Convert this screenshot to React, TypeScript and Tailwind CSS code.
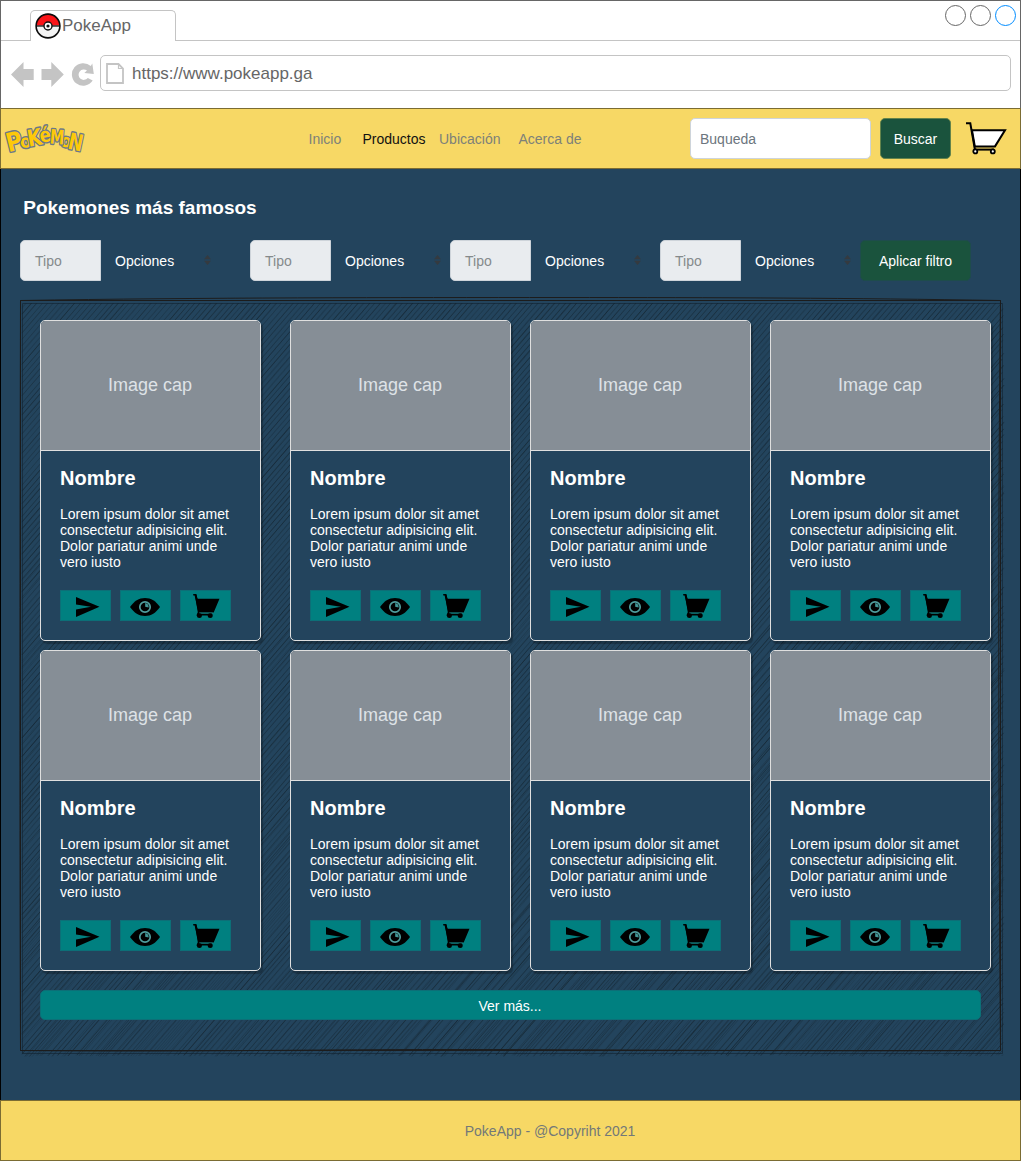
import React from "react";

const HATCH_LEFT = 22;
const HATCH_RIGHT = 1003;
const HATCH_TOP = 303;
const HATCH_BOTTOM = 1055;

// Repeatable noise in the 0..1 range, so the sketch looks the same on every render.
function noise(n: number) {
  const v = Math.sin(n * 127.1 + 11.7) * 43758.5453;
  return v - Math.floor(v);
}

function buildHatch() {
  const lines: { x1: number; y1: number; x2: number; y2: number; o: number }[] = [];
  for (let pass = 0; pass < 2; pass++) {
    let i = 0;
    for (let c = HATCH_LEFT + 4; c < HATCH_RIGHT + (HATCH_BOTTOM - HATCH_TOP) / 1.16; c += 5.45) {
      i++;
      const k = 1.16 + (noise(i + pass * 500) - 0.5) * 0.006;
      let x1 = c + (noise(i * 3 + pass) - 0.5) * 1.2;
      let y1 = HATCH_TOP;
      if (x1 > HATCH_RIGHT - 1) {
        y1 += (x1 - HATCH_RIGHT + 1) * k;
        x1 = HATCH_RIGHT - 1 + noise(i) * 2;
      }
      let y2 = HATCH_BOTTOM + noise(i * 7) * 1.5;
      let x2 = x1 - (y2 - y1) / k;
      if (x2 < HATCH_LEFT) {
        y2 = y1 + (x1 - HATCH_LEFT) * k;
        x2 = HATCH_LEFT;
      }
      if (y2 <= y1) continue;
      const strength = pass === 0 ? 0.6 : 0.35;
      lines.push({ x1, y1, x2, y2, o: 0.15 + noise(i * 5 + pass) * strength });
    }
  }
  return lines;
}

const hatch = buildHatch();

function SketchFrame() {
  return (
    <svg className="absolute -left-5 -top-[300px] pointer-events-none" width="1021" height="1161" fill="none">
      <g stroke="#142028" strokeWidth="0.7">
        {hatch.map((l, i) => (
          <line key={i} x1={l.x1} y1={l.y1} x2={l.x2} y2={l.y2} strokeOpacity={l.o} />
        ))}
      </g>
      <g stroke="#10212e" strokeOpacity="0.6" strokeWidth="1">
        <path d="M22.5 303.5H1002.5V1053.5H22.5Z" />
      </g>
      <g stroke="#1c1c1c" strokeWidth="1">
        <path d="M20.5 300.5H1000.5V1050.5H20.5Z" />
        <path d="M20.5 300.5C200 297.5 400 297.5 560 297.5S850 298 1000.5 300.5C998 500 998.5 800 1000.5 1050.5C820 1051.5 600 1049.5 450 1049.5S200 1052 20.5 1050.5C19.5 800 20 500 20.5 300.5" />
      </g>
    </svg>
  );
}

function PokeBall() {
  return (
    <svg width="26" height="26" viewBox="0 0 26 26" className="shrink-0">
      <circle cx="13" cy="13" r="11.8" fill="#f4f4f4" />
      <path d="M1.3 12.5a11.7 11.7 0 0 1 23.4 0Z" fill="#fb1418" />
      <path d="M1 13H25" stroke="#111" strokeWidth="1.3" />
      <circle cx="13" cy="13" r="11.9" fill="none" stroke="#0b0b0b" strokeWidth="1.6" />
      <circle cx="13" cy="13" r="4" fill="#fff" stroke="#111" strokeWidth="1.4" />
      <circle cx="13" cy="13" r="1.6" fill="#111" />
    </svg>
  );
}

const logoLetters = [
  { ch: "o", x: 25.6, y: 26.6, s: 18, r: -10, w: 0.92 },
  { ch: "P", x: 15.2, y: 29.2, s: 26, r: -14, w: 0.84 },
  { ch: "K", x: 35, y: 24.6, s: 23, r: -10, w: 0.82 },
  { ch: "o", x: 64.2, y: 26, s: 18, r: 8, w: 0.9 },
  { ch: "é", x: 45.6, y: 20.8, s: 20, r: -12, w: 0.84 },
  { ch: "M", x: 55.6, y: 23, s: 20, r: 4, w: 0.72 },
  { ch: "N", x: 73.2, y: 29, s: 23, r: 12, w: 0.76 },
];

function PokemonLogo() {
  return (
    <svg width="90" height="40" viewBox="0 0 90 40" className="shrink-0" role="img" aria-label="Pokémon">
      {logoLetters.map((l, i) => (
        <text
          key={i}
          transform={`translate(${l.x} ${l.y}) rotate(${l.r}) scale(${l.w} 1)`}
          fontFamily="'DejaVu Sans', sans-serif"
          fontWeight="bold"
          fontSize={l.s}
          textAnchor="middle"
          fill="#fdc90a"
          stroke="#6b7888"
          strokeWidth="2.8"
          strokeLinejoin="round"
          style={{ paintOrder: "stroke" }}
        >
          {l.ch}
        </text>
      ))}
    </svg>
  );
}

function OutlineCart() {
  return (
    <svg width="42" height="34" viewBox="0 0 42 34" fill="none" stroke="#000" strokeWidth="2">
      <path d="M7 8.3H40L30 24.4H9.8Z" fill="#fff" />
      <path d="M1 1.3H5.3L10 28" />
      <path d="M9 27.6H29" />
      <circle cx="10.3" cy="29.4" r="2" fill="#fff" strokeWidth="1.8" />
      <circle cx="27.8" cy="29.4" r="2" fill="#fff" strokeWidth="1.8" />
    </svg>
  );
}

function SendIcon() {
  return (
    <svg width="24" height="20" viewBox="0 0 24 20">
      <path d="M0 0L23.5 9.8L0 20V12.4L15 9.8L0 7.4Z" fill="#000" />
    </svg>
  );
}

function EyeIcon() {
  return (
    <svg width="30" height="18" viewBox="0 0 30 18">
      <path d="M0 9C4 3.2 9 0 15 0S26 3.2 30 9C26 14.8 21 18 15 18S4 14.8 0 9Z" fill="#000" />
      <circle cx="15" cy="9" r="5.2" stroke="#4f9c9c" strokeWidth="1.7" fill="#000" />
      <path d="M15.2 5V8.8L18.6 9.6A3.9 3.9 0 0 0 15.2 5Z" fill="#3f9494" />
    </svg>
  );
}

function CartIcon() {
  return (
    <svg width="27" height="24" viewBox="0 0 27 24">
      <path d="M1.5 0.9H3.4L4.7 4.8H26.5L20.7 18.5H5.4Z" fill="#000" />
      <path d="M0.2 0.8H2.8L5.6 18.4L4.6 20.6H19" fill="none" stroke="#000" strokeWidth="1.6" />
      <circle cx="6.4" cy="21.4" r="2.5" fill="#000" />
      <circle cx="17.2" cy="21.4" r="2.5" fill="#000" />
      <path d="M6.4 18.9H19.8" stroke="#287575" strokeWidth=".6" />
    </svg>
  );
}

function Card() {
  return (
    <article className="flex h-[321px] w-[221px] flex-col overflow-hidden rounded-[5px] border border-[#dfdfdf] bg-[#23445d] shadow-[2px_3px_1px_rgba(0,0,0,0.25)]">
      <div className="flex h-[130px] items-center justify-center border-b border-[#dfdfdf] bg-[#868e96] pb-[2px] pr-px text-lg text-[#dee2e6]">
        Image cap
      </div>
      <div className="flex flex-col pl-[19px] pt-[15px]">
        <h2 className="text-[20px] font-bold leading-6 text-white">Nombre</h2>
        <p className="mt-4 whitespace-nowrap text-sm leading-4 text-white">
          Lorem ipsum dolor sit amet
          <br />
          consectetur adipisicing elit.
          <br />
          Dolor pariatur animi unde
          <br />
          vero iusto
        </p>
        <div className="mt-5 flex gap-[9px]">
          <button className="flex h-[31px] w-[51px] items-center justify-center border border-[#0c6f77] bg-[#008080] pl-[4px] pt-[2px]">
            <SendIcon />
          </button>
          <button className="flex h-[31px] w-[51px] items-center justify-center border border-[#0c6f77] bg-[#008080] pr-px pt-[2px]">
            <EyeIcon />
          </button>
          <button className="flex h-[31px] w-[51px] items-center justify-center border border-[#0c6f77] bg-[#008080] pl-[2px]">
            <CartIcon />
          </button>
        </div>
      </div>
    </article>
  );
}

function Filter({ width }: { width: string }) {
  return (
    <div className={`flex h-[41px] shrink-0 ${width}`}>
      <div className="flex w-[81px] items-center rounded-l-[5px] border border-[#ced4da] bg-[#e9ecef] pl-[14px] pt-px text-sm text-[#858a8b]">
        Tipo
      </div>
      <div className="flex w-[110px] items-center justify-between pl-[14px] pt-px text-sm text-white">
        Opciones
        <svg width="7" height="10" viewBox="0 0 7 10" fill="#343a40" className="mb-[2px]">
          <path d="M0 4.2L3.5 0L7 4.2ZM0 5.8L3.5 10L7 5.8Z" />
        </svg>
      </div>
    </div>
  );
}

export default function App() {
  return (
    <div className="flex h-[1161px] w-[1021px] flex-col overflow-hidden bg-white font-['Liberation_Sans',Arial,sans-serif]">
      <header className="flex h-[108px] shrink-0 flex-col border-x border-t border-[#666]">
        <div className="flex h-10 shrink-0">
          <div className="w-[29px] border-b border-[#c4c4c4]" />
          <div className="mt-[9px] flex h-[31px] w-[146px] items-center rounded-t-[5px] border-x border-t border-[#c4c4c4] pl-1 text-[17px] text-[#666]">
            <PokeBall />
            <span className="ml-[1px]">PokeApp</span>
          </div>
          <div className="flex flex-1 justify-end gap-1 border-b border-[#c4c4c4] pr-1 pt-1">
            <span className="size-[21px] rounded-full border border-[#666]" />
            <span className="size-[21px] rounded-full border border-[#666]" />
            <span className="size-[21px] rounded-full border border-[#008cff]" />
          </div>
        </div>
        <div className="flex pl-[10px] pt-[14px]">
          <svg width="85" height="26" viewBox="0 0 85 26" className="mt-[6px] shrink-0" fill="#c4c4c4">
            <path d="M0 13.5L12.5 1V8H22.7V19H12.5V26Z" />
            <path d="M52.8 13.5L40.3 1V8H30.5V19H40.3V26Z" />
            <path d="M79.8 5.1L81.3 2.6L82.8 13L73.3 12L76 9.6A5.2 5.2 0 1 0 76.8 17L81.7 19.6A11.3 11.3 0 1 1 79.8 5.1Z" />
          </svg>
          <div className="ml-[4px] flex h-9 w-[911px] items-center rounded-[5px] border border-[#c4c4c4] text-[17px] text-[#666]">
            <svg width="18" height="21" viewBox="0 0 18 21" className="ml-[5px] mt-px" fill="none" stroke="#c4c4c4" strokeWidth="1.8">
              <path d="M1 1H12.5L17 5.5V20H1Z" />
              <path d="M12.5 1V5.5H17" strokeWidth="1.2" />
            </svg>
            <span className="ml-2 pt-[2px]">https://www.pokeapp.ga</span>
          </div>
        </div>
      </header>

      <nav className="flex h-[61px] shrink-0 border border-[#7b6c33] bg-[#f7d865] text-sm text-[#7d8179]">
        <div className="mt-3">
          <PokemonLogo />
        </div>
        <div className="ml-[217.5px] flex items-center pt-px">
          <a className="w-[54px]">Inicio</a>
          <a className="w-[76.5px] text-[#111]">Productos</a>
          <a className="w-[79.5px]">Ubicación</a>
          <a className="w-[171.5px]">Acerca de</a>
        </div>
        <div className="mt-[9px] flex h-[41px] w-[181px] shrink-0 items-center rounded-[5px] border border-[#ced4da] bg-white pl-[9px] pt-px text-[#6c757d]">
          Buqueda
        </div>
        <button className="ml-[9px] mt-[9px] flex h-[41px] w-[71px] shrink-0 items-center justify-center rounded-[5px] border border-[#64834b] bg-[#1a533d] pt-px text-white">
          Buscar
        </button>
        <div className="ml-[14px] mt-[13px] shrink-0">
          <OutlineCart />
        </div>
      </nav>

      <main className="flex h-[931px] shrink-0 flex-col border-x border-black bg-[#23445d] pl-[19px]">
        <h1 className="ml-[3.25px] mt-[27px] text-[19px] font-bold leading-6 text-white">Pokemones más famosos</h1>
        <div className="mt-5 flex">
          <Filter width="w-[230px]" />
          <Filter width="w-[200px]" />
          <Filter width="w-[210px]" />
          <Filter width="w-[200px]" />
          <button className="flex h-[41px] w-[111px] items-center justify-center rounded-[5px] border border-[#1e4c4c] bg-[#1a533d] pt-px text-sm text-white">
            Aplicar filtro
          </button>
        </div>
        <section className="relative mt-[19px] h-[756px] w-[982px]">
          <SketchFrame />
          <div className="relative flex flex-col pl-5 pt-5">
            <div className="grid w-[951px] grid-cols-[250px_240px_240px_221px] gap-y-[9px]">
              {Array.from({ length: 8 }, (_, i) => (
                <Card key={i} />
              ))}
            </div>
            <button className="mt-[19px] flex h-[30px] w-[941px] items-center justify-center rounded-[5px] border border-[#0c6f77] bg-[#008080] pr-px pt-[2px] text-sm text-white">
              Ver más...
            </button>
          </div>
        </section>
      </main>

      <footer className="flex h-[61px] shrink-0 items-center border border-[#7b6c33] bg-[#f7d865] pl-[463.75px] pt-px text-sm text-[#737878]">
        PokeApp - @Copyriht 2021
      </footer>
    </div>
  );
}
